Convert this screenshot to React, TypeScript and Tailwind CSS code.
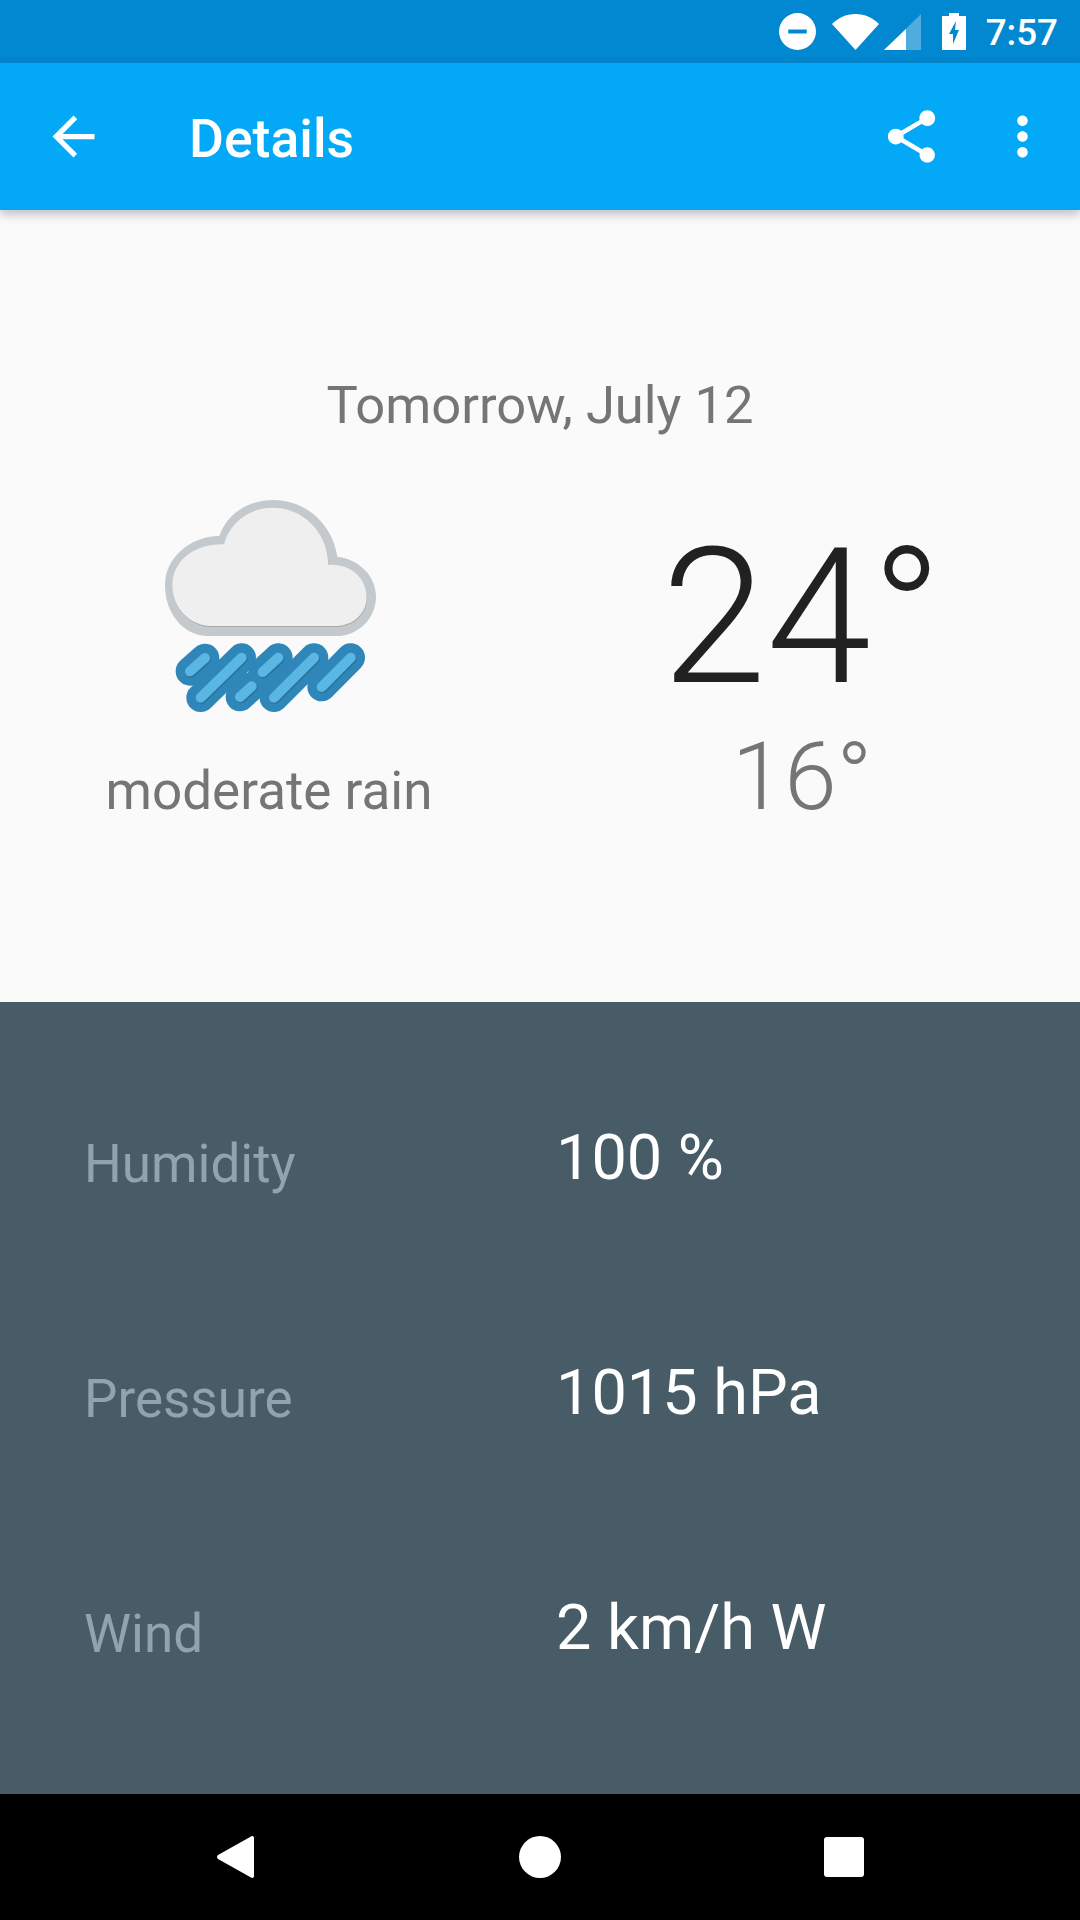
const roboto = "font-[Roboto,sans-serif]";

const cloudInner =
    "M215 438C150 438 97 385 97 315C97 250 155 190 252 193C270 125 330 83 400 83C490 83 565 160 565 255C630 250 680 295 680 350C680 400 640 438 585 438Z";

function Rain() {
    const lines = [
        "M150 574L195 534",
        "M182 653L305 533",
        "M300 651L335 619",
        "M368 576L415 533",
        "M402 653L522 533",
        "M545 621L632 533",
    ];
    return (
        <g strokeLinecap="round" fill="none">
            {lines.map((d) => (
                <path key={d} d={d} stroke="#2e86b9" strokeWidth="86" />
            ))}
            {lines.map((d) => (
                <path key={d + "s"} d={d} stroke="#2a729f" strokeWidth="30" transform="translate(3 4)" />
            ))}
            {lines.map((d) => (
                <path key={d + "l"} d={d} stroke="#5ab6e2" strokeWidth="30" />
            ))}
        </g>
    );
}

function WeatherIcon() {
    return (
        <svg viewBox="0 0 780 720" className="w-[260px] h-[240px]">
            <path
                d="M205 468C130 468 75 400 75 315C75 235 150 168 238 168C262 100 325 60 400 60C500 60 578 135 592 230C655 238 708 285 708 350C708 415 655 468 590 468Z"
                fill="#c3c9cc"
            />
            <path d={cloudInner} fill="#a6abad" transform="translate(1 3)" />
            <path d={cloudInner} fill="#efefef" />
            <Rain />
        </svg>
    );
}

function StatusBar() {
    return (
        <div className="h-[63px] bg-[#0288d1] flex items-center justify-end pr-[22px] text-white">
            <svg viewBox="0 0 36 36" className="w-[37px] h-[37px] mr-[16px]">
                <path d="M18 0a18 18 0 1 0 0 36a18 18 0 0 0 0-36ZM9 16h18v4H9Z" fill="#fff" fillRule="evenodd" />
            </svg>
            <svg viewBox="0 0 47 36" className="w-[47px] h-[36px] mr-[5px]">
                <path d="M0 10C6 4 14 0 23.5 0S41 4 47 10L23.5 36Z" fill="#fff" />
            </svg>
            <svg viewBox="0 0 37 36" className="w-[37px] h-[36px] mr-[21px]">
                <path d="M37 0V36H0Z" fill="#fff" fillOpacity="0.3" />
                <path d="M22 15V36H0Z" fill="#fff" />
            </svg>
            <svg viewBox="0 0 24 37" className="w-[24px] h-[37px] mr-[20px]">
                <path
                    d="M7 0H17V3H24V37H0V3H7ZM14 8L7 21H11V31L17 17H13Z"
                    fill="#fff"
                    fillRule="evenodd"
                />
            </svg>
            <span className={`${roboto} font-medium text-[36.75px] leading-none pt-[3px]`}>7:57</span>
        </div>
    );
}

function AppBar() {
    return (
        <div className="relative z-10 h-[147px] bg-[#03a9f6] flex items-center pl-[42px] pr-[26px] text-white shadow-[0_4px_10px_rgba(0,0,0,0.25)]">
            <svg viewBox="0 0 24 24" className="w-[63px] h-[63px]" fill="#fff">
                <path d="M20 11H7.83l5.59-5.59L12 4l-8 8 8 8 1.41-1.41L7.83 13H20v-2z" />
            </svg>
            <h1 className={`${roboto} font-medium text-[53.5px] leading-none ml-[84px] flex-1 pt-[5px]`}>Details</h1>
            <svg viewBox="0 0 24 24" className="w-[63px] h-[63px] mr-[48px]" fill="#fff">
                <path d="M18 16.08c-.76 0-1.44.3-1.96.77L8.91 12.7c.05-.23.09-.46.09-.7s-.04-.47-.09-.7l7.05-4.11c.54.5 1.25.81 2.04.81 1.66 0 3-1.34 3-3s-1.34-3-3-3-3 1.34-3 3c0 .24.04.47.09.7L8.04 9.81C7.5 9.31 6.79 9 6 9c-1.66 0-3 1.34-3 3s1.34 3 3 3c.79 0 1.5-.31 2.04-.81l7.12 4.16c-.05.21-.08.43-.08.65 0 1.61 1.31 2.92 2.92 2.92s2.92-1.31 2.92-2.92-1.31-2.92-2.92-2.92z" />
            </svg>
            <svg viewBox="0 0 24 24" className="w-[63px] h-[63px]" fill="#fff">
                <path d="M12 8c1.1 0 2-.9 2-2s-.9-2-2-2-2 .9-2 2 .9 2 2 2zm0 2c-1.1 0-2 .9-2 2s.9 2 2 2 2-.9 2-2-.9-2-2-2zm0 6c-1.1 0-2 .9-2 2s.9 2 2 2 2-.9 2-2-.9-2-2-2z" />
            </svg>
        </div>
    );
}

function Forecast() {
    return (
        <section className={`${roboto} h-[792px] bg-[#fafafa] flex flex-col items-center pt-[160px]`}>
            <p className="text-[52.5px] leading-[70px] text-[#757575]">Tomorrow, July 12</p>
            <div className="w-full grid grid-cols-2 mt-[40px]">
                <div className="flex flex-col items-center">
                    <WeatherIcon />
                    <p className="text-[53px] leading-[70px] text-[#757575] mt-[36px] mr-[2px]">moderate rain</p>
                </div>
                <div className="flex flex-col items-center pr-[16px]">
                    <p className="font-light text-[189px] leading-[200px] text-[#212121] pt-[38px]">24°</p>
                    <p className="font-light text-[94.5px] leading-[110px] text-[#757575] mt-[4px]">16°</p>
                </div>
            </div>
        </section>
    );
}

const details = [
    { label: "Humidity", value: "100 %" },
    { label: "Pressure", value: "1015 hPa" },
    { label: "Wind", value: "2 km/h W" },
];

function Details() {
    return (
        <section className={`${roboto} h-[792px] bg-[#485c67] flex flex-col pt-[121px] pl-[84px] gap-[165px]`}>
            {details.map((row) => (
                <div key={row.label} className="grid grid-cols-[472px_1fr] h-[70px]">
                    <span className="text-[53px] leading-[70px] text-[#90a4ae] mt-[6px]">{row.label}</span>
                    <span className="text-[63px] leading-[70px] text-white">{row.value}</span>
                </div>
            ))}
        </section>
    );
}

function NavBar() {
    return (
        <div className="h-[126px] bg-black flex items-center pl-[217px]">
            <svg viewBox="0 0 37 42" className="w-[37px] h-[42px]">
                <path d="M34 0.5C35.7 -0.5 37 0.5 37 2V40C37 41.5 35.7 42.5 34 41.5L1 23C-0.3 22 -0.3 20 1 19Z" fill="#fff" />
            </svg>
            <div className="w-[42px] h-[42px] rounded-full bg-white ml-[265px]" />
            <div className="w-[40px] h-[40px] rounded-[3px] bg-white ml-[263px]" />
        </div>
    );
}

export default function App() {
    return (
        <div className="w-[1080px] h-[1920px] overflow-hidden flex flex-col">
            <StatusBar />
            <AppBar />
            <Forecast />
            <Details />
            <NavBar />
        </div>
    );
}
